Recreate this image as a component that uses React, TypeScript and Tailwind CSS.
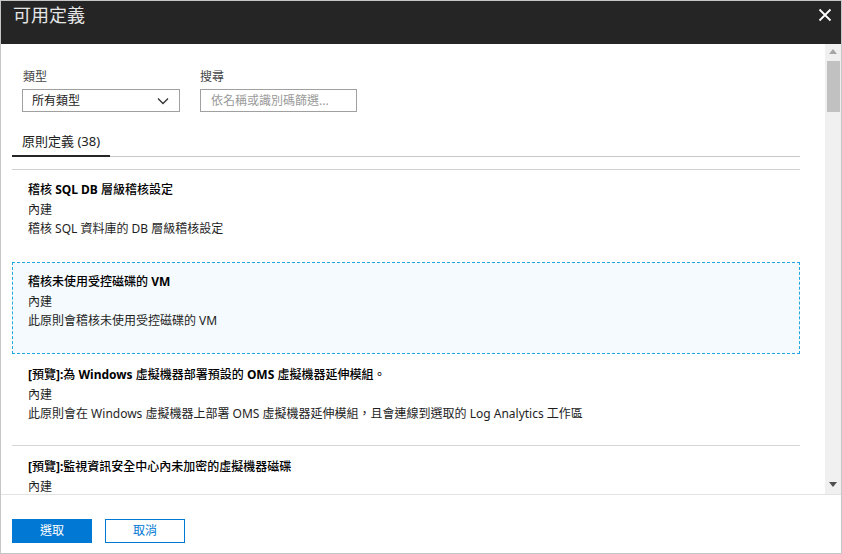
import React from "react";

const font = { fontFamily: '"Segoe UI", "Noto Sans", "Noto Sans CJK TC", sans-serif' };

type Item = { title: string; kind: string; desc: string };

const items: Item[] = [
  { title: "稽核 SQL DB 層級稽核設定", kind: "內建", desc: "稽核 SQL 資料庫的 DB 層級稽核設定" },
  { title: "稽核未使用受控磁碟的 VM", kind: "內建", desc: "此原則會稽核未使用受控磁碟的 VM" },
  {
    title: "[預覽]:為 Windows 虛擬機器部署預設的 OMS 虛擬機器延伸模組。",
    kind: "內建",
    desc: "此原則會在 Windows 虛擬機器上部署 OMS 虛擬機器延伸模組，且會連線到選取的 Log Analytics 工作區",
  },
  { title: "[預覽]:監視資訊安全中心內未加密的虛擬機器磁碟", kind: "內建", desc: "" },
];

function Title({ text }: { text: string }) {
  const parts = text.split(/([A-Za-z\[\]:]+)/);
  return (
    <div className="font-medium text-black">
      {parts.map((p, i) =>
        /[A-Za-z\[\]:]/.test(p) ? (
          <span key={i} className="font-bold">
            {p}
          </span>
        ) : (
          <span key={i}>{p}</span>
        )
      )}
    </div>
  );
}

function ItemBody({ item }: { item: Item }) {
  return (
    <div className="text-[12px] leading-[19.5px] text-[#1e1e1e]">
      <Title text={item.title} />
      <div>{item.kind}</div>
      {item.desc && <div>{item.desc}</div>}
    </div>
  );
}

export default function App() {
  return (
    <div
      style={font}
      className="w-[842px] h-[554px] border border-[#c6c6c6] flex flex-col bg-white overflow-hidden"
    >
      {/* Header */}
      <div className="h-[43px] shrink-0 bg-[#252525] flex items-start justify-between pl-[12px] pr-[9px]">
        <div className="text-[18px] leading-[28px] text-[#e6e6e6]">可用定義</div>
        <svg width="14" height="14" viewBox="0 0 14 14" className="mt-[7px]">
          <path d="M1.5 1.5 L12.5 12.5 M12.5 1.5 L1.5 12.5" stroke="#ffffff" strokeWidth="1.8" />
        </svg>
      </div>

      {/* Body */}
      <div className="flex flex-1 min-h-0">
        <div className="flex-1 overflow-hidden pl-[11px]">
          <div className="w-[788px]">
            {/* Filters */}
            <div className="flex gap-[20px] pl-[10px] pt-[25px]">
              <div className="flex flex-col">
                <div className="text-[12px] leading-[16px] text-[#444] pl-[1px]">類型</div>
                <div className="mt-[4px] w-[158px] h-[23px] border border-[#a0a0a0] flex items-center justify-between pl-[9px] pr-[10px]">
                  <span className="text-[12px] text-[#222]">所有類型</span>
                  <svg width="12" height="8" viewBox="0 0 12 8">
                    <path d="M1 1.5 L6 6.5 L11 1.5" fill="none" stroke="#333" strokeWidth="1.3" />
                  </svg>
                </div>
              </div>
              <div className="flex flex-col">
                <div className="text-[12px] leading-[16px] text-[#444]">搜尋</div>
                <div className="mt-[4px] w-[157px] h-[23px] border border-[#a0a0a0] flex items-center pl-[10px]">
                  <span className="text-[12px] text-[#9a9a9a]">依名稱或識別碼篩選...</span>
                </div>
              </div>
            </div>

            {/* Tabs */}
            <div className="flex mt-[18px]">
              <div className="h-[27px] px-[10px] border-b-2 border-[#252525] flex items-center text-[13px] text-[#222] pb-[1px]">
                原則定義 (38)
              </div>
              <div className="flex-1 border-b border-[#c8c8c8]" />
            </div>
            <div className="mt-[12px] border-t border-[#d0d0d0]" />

            {/* List */}
            <div className="h-[92px] pl-[16px] pt-[10px]">
              <ItemBody item={items[0]} />
            </div>
            <div className="h-[92px] pl-[15px] pt-[9px] border border-dashed border-[#20a7e0] bg-[#f4fafd]">
              <ItemBody item={items[1]} />
            </div>
            <div className="h-[92px] pl-[16px] pt-[11px] border-b border-[#d6d6d6]">
              <ItemBody item={items[2]} />
            </div>
            <div className="h-[92px] pl-[16px] pt-[11px]">
              <ItemBody item={items[3]} />
            </div>
          </div>
        </div>

        {/* Scrollbar */}
        <div className="w-[16px] shrink-0 bg-[#f0f0f0] flex flex-col items-center">
          <svg width="8" height="5" viewBox="0 0 8 5" className="mt-[5px]">
            <path d="M0 5 L4 0 L8 5 Z" fill="#a6a6a6" />
          </svg>
          <div className="mt-[7px] w-[13px] h-[51px] bg-[#c1c1c1]" />
          <div className="flex-1" />
          <svg width="8" height="5" viewBox="0 0 8 5" className="mb-[7px]">
            <path d="M0 0 L8 0 L4 5 Z" fill="#505050" />
          </svg>
        </div>
      </div>

      {/* Footer */}
      <div className="h-[59px] shrink-0 border-t border-[#e3e3e3] flex items-start gap-[13px] pl-[11px] pt-[24px]">
        <button className="w-[80px] h-[24px] bg-[#0078d4] text-white text-[12px] flex items-center justify-center">
          選取
        </button>
        <button className="w-[80px] h-[24px] border border-[#0078d4] text-[#0078d4] text-[12px] flex items-center justify-center bg-white">
          取消
        </button>
      </div>
    </div>
  );
}
